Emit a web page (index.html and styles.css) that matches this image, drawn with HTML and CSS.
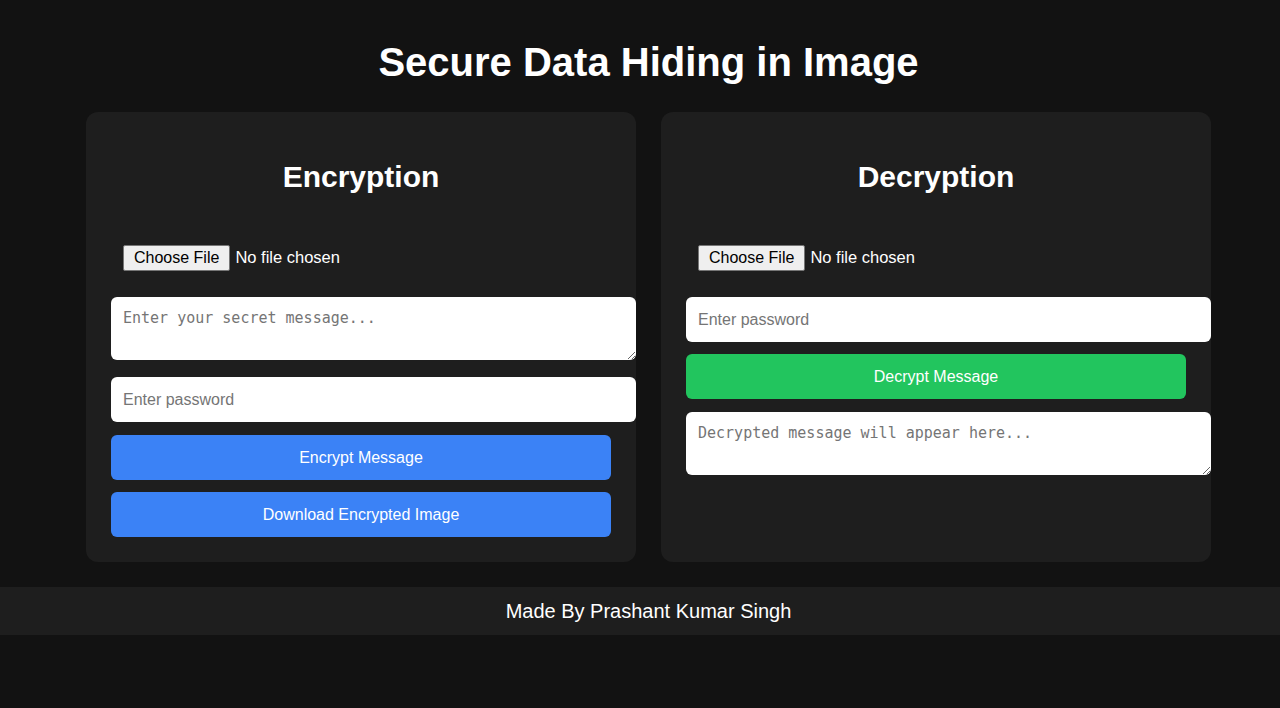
FILE: index.html
```html
<!DOCTYPE html>
<html lang="en">
<head>
<meta charset="UTF-8">
<title>Secure Data Hiding in Image</title>
<link rel="stylesheet" href="styles.css">
</head>
<body>
  <div class="page">
    <h1 class="page-title">Secure Data Hiding in Image</h1>
    <main class="panels">
      <section class="card">
        <h2 class="card-title">Encryption</h2>
        <input class="file-input" type="file" accept="image/*">
        <textarea class="text-box text-box--first" placeholder="Enter your secret message..."></textarea>
        <input class="field field--after-text" type="password" placeholder="Enter password">
        <button class="btn btn--blue btn--after-field" type="button">Encrypt Message</button>
        <button class="btn btn--blue btn--after-btn" type="button">Download Encrypted Image</button>
      </section>
      <section class="card">
        <h2 class="card-title">Decryption</h2>
        <input class="file-input" type="file" accept="image/*">
        <input class="field field--first" type="password" placeholder="Enter password">
        <button class="btn btn--green btn--after-first" type="button">Decrypt Message</button>
        <textarea class="text-box text-box--after-btn" placeholder="Decrypted message will appear here..." readonly></textarea>
      </section>
    </main>
  </div>
  <footer class="footer">Made By Prashant Kumar Singh</footer>
</body>
</html>
```

FILE: styles.css
```css
* {
  box-sizing: border-box;
}

html, body {
  margin: 0;
  padding: 0;
  background: #121212;
  color: #ffffff;
  font-family: "Liberation Sans", Arial, sans-serif;
}

.page {
  padding: 39px 0 0 17px;
}

.page-title {
  margin: 0;
  font-size: 40px;
  font-weight: 700;
  line-height: 46px;
  text-align: center;
}

.panels {
  display: flex;
  justify-content: center;
  gap: 25px;
  margin-top: 27px;
}

.card {
  width: 550px;
  background: #1e1e1e;
  border-radius: 12px;
  padding: 25px;
  display: flex;
  flex-direction: column;
  align-items: flex-start;
}

.card-title {
  margin: 23px 0 0;
  align-self: stretch;
  text-align: center;
  font-size: 30px;
  font-weight: 700;
  line-height: 34.5px;
}

.file-input {
  margin-top: 38.5px;
  padding: 12px;
  width: 100%;
  height: 50px;
  font-family: "Liberation Sans", Arial, sans-serif;
  font-size: 16.5px;
  color: #ffffff;
}

.file-input::file-selector-button {
  font-family: "Liberation Sans", Arial, sans-serif;
  font-size: 16px;
  height: 26px;
  padding: 0 10px;
  margin-right: 5px;
  border: 1px solid #767676;
  border-radius: 2px;
  background: #efefef;
  color: #000000;
}

.text-box,
.field {
  width: calc(100% + 25px);
  border: none;
  border-radius: 6px;
  background: #ffffff;
  color: #000000;
  padding: 12px;
  outline: none;
}

.text-box {
  height: 63px;
  font-family: "DejaVu Sans Mono", monospace;
  font-size: 15px;
  line-height: 18px;
}

.field {
  height: 45px;
  font-family: "Liberation Sans", Arial, sans-serif;
  font-size: 16px;
}

.text-box::placeholder,
.field::placeholder {
  color: #757575;
}

.text-box--first { margin-top: 14px; }
.text-box--after-btn { margin-top: 13px; }
.field--after-text { margin-top: 17px; }
.field--first { margin-top: 14px; }

.btn {
  width: 100%;
  height: 45px;
  border: none;
  border-radius: 6px;
  color: #ffffff;
  font-family: "Liberation Sans", Arial, sans-serif;
  font-size: 16px;
  cursor: pointer;
}

.btn--blue { background: #3b82f6; }
.btn--green { background: #22c55e; }

.btn--after-field { margin-top: 13px; }
.btn--after-btn { margin-top: 12px; }
.btn--after-first { margin-top: 12px; }

.footer {
  margin-top: 25px;
  height: 48px;
  background: #1e1e1e;
  padding-left: 17px;
  display: flex;
  align-items: center;
  justify-content: center;
  font-size: 20px;
}
```
